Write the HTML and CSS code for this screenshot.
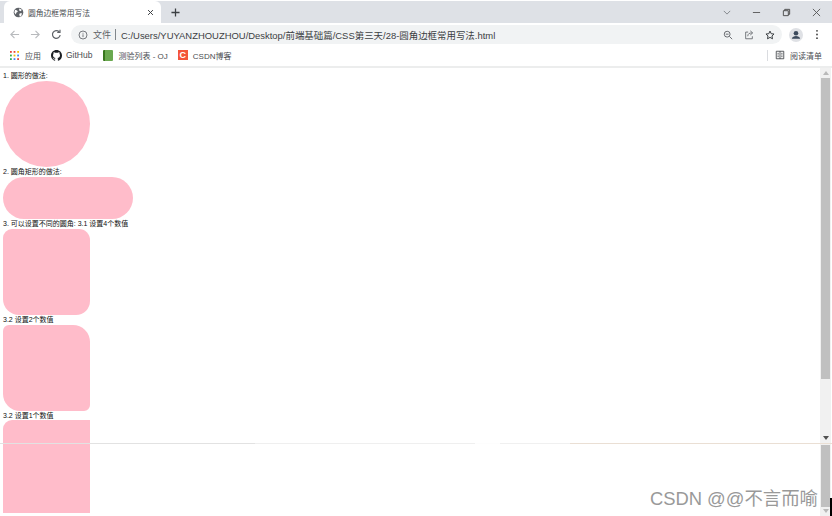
FILE: index.html
```html
<!DOCTYPE html>
<html lang="zh-CN">
<head>
<meta charset="utf-8">
<title>圆角边框常用写法</title>
<link rel="stylesheet" href="styles.css">
</head>
<body>
<div class="window">
  <header class="tabstrip">
    <div class="tab">
      <svg class="tab-globe" viewBox="0 0 16 16"><circle cx="8" cy="8" r="7" fill="#5f6368"/><path d="M3 4l3 1 1 2-2 1-1 3-2-3zM9 2l4 2-2 2-2-1zM10 9l3 0-1 4-2 1-1-3z" fill="#fff"/></svg>
      <span class="tab-title">圆角边框常用写法</span>
      <svg class="tab-close" viewBox="0 0 10 10"><path d="M1.500 1.500l7 7M8.500 1.500l-7 7" stroke="#3c4043" stroke-width="1.400"/></svg>
    </div>
    <svg class="new-tab" viewBox="0 0 10 10"><path d="M5 .5v9M.5 5h9" stroke="#3c4043" stroke-width="1.400"/></svg>
    <div class="win-controls">
      <svg class="win-chev" viewBox="0 0 10 6"><path d="M1 1l4 4 4-4" fill="none" stroke="#70757a"/></svg>
      <svg class="win-btn" viewBox="0 0 10 10"><path d="M1 5h8" stroke="#555"/></svg>
      <svg class="win-btn" viewBox="0 0 10 10"><path d="M1.500 3h5.500v5.500h-5.500zM3 3v-1.500h5.500v5.500h-1.500" fill="none" stroke="#444"/></svg>
      <svg class="win-btn" viewBox="0 0 10 10"><path d="M1 1l8 8M9 1l-8 8" stroke="#555"/></svg>
    </div>
  </header>
  <nav class="toolbar">
    <svg class="nav-icon" viewBox="0 0 12 12"><path d="M11 6H2M6 2L2 6l4 4" fill="none" stroke="#b8babd" stroke-width="1.200"/></svg>
    <svg class="nav-icon" viewBox="0 0 12 12"><path d="M1 6h9M6 2l4 4-4 4" fill="none" stroke="#b8babd" stroke-width="1.200"/></svg>
    <svg class="nav-icon" viewBox="0 0 12 12"><path d="M10 6.500A4.200 4.200 0 1 1 8.800 3M9.800 .8v3h-3" fill="none" stroke="#5f6368" stroke-width="1.300"/></svg>
    <div class="omnibox">
      <svg class="info" viewBox="0 0 12 12"><circle cx="6" cy="6" r="4.800" fill="none" stroke="#5f6368"/><path d="M6 5.200v3.300M6 3.400v1" stroke="#5f6368"/></svg>
      <span class="scheme">文件</span>
      <span class="sep"></span>
      <span class="url">C:/Users/YUYANZHOUZHOU/Desktop/前端基础篇/CSS第三天/28-圆角边框常用写法.html</span>
      <svg class="omni-icon" viewBox="0 0 12 12"><circle cx="5" cy="5" r="3.500" fill="none" stroke="#5f6368" stroke-width="1.100"/><path d="M7.700 7.700L11 11M3.300 5h3.400" stroke="#5f6368" stroke-width="1.100"/></svg>
      <svg class="omni-icon" viewBox="0 0 12 12"><path d="M5 2.500H2v8h8v-3M4.500 7.500c0-3 2-4 5-4M7.500 1l3 2.500-3 2.500" fill="none" stroke="#5f6368"/></svg>
      <svg class="omni-icon" viewBox="0 0 12 12"><path d="M6 1.300l1.450 3.150 3.400.4-2.500 2.300.65 3.400L6 8.850 3 10.550l.65-3.400-2.500-2.300 3.400-.4z" fill="none" stroke="#3c4043" stroke-width="1.200"/></svg>
    </div>
    <svg class="avatar" viewBox="0 0 14 14"><circle cx="7" cy="7" r="7" fill="#dfe1e5"/><circle cx="7" cy="5.200" r="2.300" fill="#3c4a5c"/><path d="M2.800 10.800c.4-2 2.200-2.800 4.200-2.800s3.800.8 4.200 2.800z" fill="#3c4a5c"/></svg>
    <svg class="menu" viewBox="0 0 4 12"><circle cx="2" cy="2" r="1" fill="#444"/><circle cx="2" cy="6" r="1" fill="#444"/><circle cx="2" cy="10" r="1" fill="#444"/></svg>
  </nav>
  <nav class="bookmarks">
    <a class="bm bm-apps">
      <svg class="bm-icon" viewBox="0 0 10 10">
        <g fill="#ea4335"><rect x="0" y="0" width="2" height="2"/><rect x="4" y="0" width="2" height="2"/></g>
        <rect x="8" y="0" width="2" height="2" fill="#fbbc04"/>
        <rect x="0" y="4" width="2" height="2" fill="#34a853"/><rect x="4" y="4" width="2" height="2" fill="#fbbc04"/><rect x="8" y="4" width="2" height="2" fill="#4285f4"/>
        <rect x="0" y="8" width="2" height="2" fill="#34a853"/><rect x="4" y="8" width="2" height="2" fill="#4285f4"/><rect x="8" y="8" width="2" height="2" fill="#ea4335"/>
      </svg>
      应用
    </a>
    <a class="bm bm-gh">
      <svg class="bm-icon-lg" viewBox="0 0 16 16"><path fill="#1b1f23" d="M8 0C3.580 0 0 3.580 0 8c0 3.540 2.290 6.530 5.470 7.590.4.070.55-.17.55-.38 0-.19-.01-.82-.01-1.490-2.010.37-2.530-.49-2.690-.94-.09-.23-.48-.94-.82-1.130-.28-.15-.68-.52-.01-.53.630-.01 1.080.58 1.230.82.720 1.210 1.870.87 2.330.66.070-.52.280-.87.510-1.070-1.780-.2-3.640-.89-3.640-3.950 0-.87.310-1.590.82-2.150-.08-.2-.36-1.020.08-2.120 0 0 .67-.21 2.200.82.640-.18 1.320-.27 2-.27s1.360.09 2 .27c1.530-1.040 2.200-.82 2.200-.82.440 1.100.16 1.920.08 2.120.51.560.82 1.270.82 2.150 0 3.070-1.870 3.750-3.650 3.950.29.250.54.730.54 1.480 0 1.070-.01 1.930-.01 2.200 0 .21.150.46.550.38A8.010 8.010 0 0 0 16 8c0-4.420-3.580-8-8-8z"/></svg>
      GitHub
    </a>
    <a class="bm bm-oj"><span class="oj-icon"></span>测验列表 - OJ</a>
    <a class="bm bm-csdn"><span class="csdn-icon">C</span>CSDN博客</a>
    <span class="bm-sep"></span>
    <a class="bm bm-read">
      <svg class="read-icon" viewBox="0 0 12 12"><path d="M1.500 1.500h9v9h-9zM6 1.500v9M3 4h1.500M3 6h1.500M3 8h1.500M7.500 4h1.500M7.500 6h1.500M7.500 8h1.500" fill="none" stroke="#3c4043"/></svg>
      阅读清单
    </a>
  </nav>
  <div class="viewport">
    <main class="page">
      <div class="page-scroll">
        1. 圆形的做法:
        <div class="shape circle"></div>
        2. 圆角矩形的做法:
        <div class="shape pill"></div>
        3. 可以设置不同的圆角: 3.1 设置4个数值
        <div class="shape four"></div>
        3.2 设置2个数值
        <div class="shape two"></div>
        3.2 设置1个数值
        <div class="shape one"></div>
      </div>
      <div class="scrollbar">
        <span class="sb-up"></span>
        <span class="sb-thumb sb-thumb-main"></span>
        <span class="sb-down"></span>
      </div>
      <div class="seam"></div>
      <div class="scrollbar-2">
        <span class="sb-thumb sb-thumb-2"></span>
        <span class="sb-down sb-down-pale"></span>
      </div>
      <div class="watermark">CSDN @@不言而喻</div>
      <div class="cursor"></div>
    </main>
  </div>
</div>
</body>
</html>
```
FILE: styles.css
```css
* { box-sizing: border-box; }
html, body { margin: 0; padding: 0; background: #fff; overflow: hidden; }
body { width: 832px; height: 516px; font-family: "Liberation Sans", "Noto Sans CJK SC", sans-serif; }
.window { width: 832px; height: 516px; display: flex; flex-direction: column; }

.tabstrip { height: 23px; background: #dee1e6; border-top: 1px solid #fff; display: flex; align-items: flex-end; padding-left: 4px; flex: none; }
.tab { width: 157px; height: 22px; background: #fff; border-radius: 6px 6px 0 0; display: flex; align-items: center; padding: 0 7px 0 9px; }
.tab-globe { width: 11px; height: 11px; margin-right: 4px; flex: none; }
.tab-title { font-size: 7.750px; color: #4a4d51; flex: 1; white-space: nowrap; }
.tab-close { width: 7px; height: 7px; flex: none; }
.new-tab { width: 9px; height: 9px; margin: 0 0 6px 10px; flex: none; }
.win-controls { margin-left: auto; height: 22px; display: flex; align-items: center; padding-right: 11px; gap: 21px; }
.win-chev { width: 8px; height: 5px; }
.win-btn { width: 9px; height: 9px; }

.toolbar { height: 23px; background: #fff; display: flex; align-items: center; padding-left: 9px; flex: none; }
.nav-icon { width: 11px; height: 11px; margin-right: 10px; flex: none; }
.omnibox { width: 711px; height: 19px; margin-left: -1px; background: #f1f3f4; border-radius: 10px; display: flex; align-items: center; padding-left: 7px; }
.info { width: 10px; height: 10px; flex: none; }
.scheme { font-size: 9px; color: #5f6368; margin-left: 5px; white-space: nowrap; }
.sep { width: 1px; height: 11px; background: #80868b; margin: 0 5px 0 4px; }
.url { font-size: 9.450px; color: #3c4043; white-space: nowrap; flex: 1; }
.omni-icon { width: 10px; height: 10px; margin-right: 11px; flex: none; }
.omni-icon:last-child { margin-right: 7px; }
.avatar { width: 14px; height: 14px; margin-left: 7px; flex: none; }
.menu { width: 4px; height: 11px; margin-left: 12px; flex: none; }

.bookmarks { height: 22px; background: #fff; border-bottom: 2px solid #eceded; display: flex; align-items: center; padding: 0 10px 2px 10px; flex: none; font-size: 8px; color: #4a4d51; }
.bm { display: flex; align-items: center; white-space: nowrap; }
.bm-icon { width: 9px; height: 9px; margin-right: 6px; }
.bm-icon-lg { width: 11px; height: 11px; margin-right: 4px; }
.bm-gh { margin-left: 10px; font-size: 8.500px; }
.bm-oj { margin-left: 11px; }
.oj-icon { width: 10px; height: 11px; background: #6aa84f; border-radius: 1px; border-left: 2px solid #38761d; margin-right: 5px; }
.bm-csdn { margin-left: 10px; }
.csdn-icon { width: 10px; height: 10px; background: #f4553a; color: #fff; font-size: 9px; font-weight: bold; display: flex; align-items: center; justify-content: center; margin-right: 5px; }
.bm-sep { width: 1px; height: 11px; background: #dadce0; margin-left: auto; margin-right: 7px; }
.read-icon { width: 10px; height: 10px; margin-right: 5px; }

.viewport { flex: 1; min-height: 0; }
.page { position: relative; height: 100%; overflow: hidden; }
.page-scroll { height: 445px; overflow: hidden; padding: 3.200px 0 0 3px; font-size: 7px; line-height: 9.400px; color: #111; }
.shape { width: 87px; height: 86.500px; background: #ffbcca; }
.circle { border-radius: 50%; }
.pill { width: 130px; height: 42.700px; border-radius: 22px; }
.four { border-radius: 9px 11px 14px 16px; }
.two { border-radius: 6px 17px 6px 17px; }
.one { border-radius: 9px 0 0 0; height: 120px; }

.scrollbar { position: absolute; right: 1px; top: 0; width: 11px; height: 375px; background: #f1f1f1; }
.sb-thumb { position: absolute; left: 1px; width: 9px; background: #c0c0c0; }
.sb-thumb-main { top: 10px; height: 301px; }
.sb-up { position: absolute; top: 3px; left: 3px; border: 3px solid transparent; border-top: 0; border-bottom: 4px solid #b9b9b9; }
.sb-down { position: absolute; bottom: 3px; left: 3px; border: 3px solid transparent; border-bottom: 0; border-top: 4px solid #505050; }
.seam { position: absolute; left: 0; right: 0; top: 375px; height: 1px; background: linear-gradient(to right, #e2e2e2 0 255px, #efefef 255px 475px, #fdfdfd 475px 500px, #f0f0f0 500px 570px, #eadfd4 570px 100%); }
.scrollbar-2 { position: absolute; right: 1px; top: 376px; width: 11px; height: 72px; background: #f1f1f1; }
.sb-thumb-2 { top: 1px; height: 62px; }
.sb-down-pale { border-top-color: #b9b9b9; }
.watermark { position: absolute; right: 14px; bottom: 7px; font-size: 18.400px; line-height: 20px; color: #999; font-family: "Liberation Sans", "Noto Sans CJK SC", sans-serif; white-space: nowrap; }
.cursor { position: absolute; right: 0; bottom: 0; width: 2px; height: 18px; background: #000; }
```
